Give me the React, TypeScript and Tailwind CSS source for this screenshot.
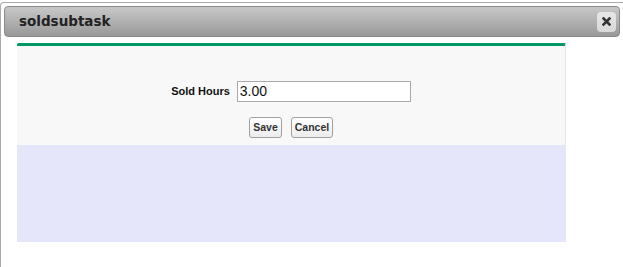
import React from 'react';

export default function App() {
  return (
    <div className="w-[623px] h-[267px] bg-white pt-[2px] overflow-hidden" style={{ fontFamily: '"Liberation Sans", Arial, sans-serif' }}>
      <div className="h-[275px] border-l border-t border-[#aaaaaa] rounded-tl-[4px] px-[3px] pt-[3px] bg-white">
        <div className="h-[31px] flex items-center justify-between rounded-[4px] border border-[#8a8a8a] bg-gradient-to-b from-[#c8c8c8] to-[#999999] pl-[14px] pr-[3px]">
          <span className="text-[13.5px] font-bold text-[#222222]" style={{ fontFamily: '"DejaVu Sans", Verdana, sans-serif' }}>soldsubtask</span>
          <button className="w-[19px] h-[20px] rounded-[4px] bg-gradient-to-b from-[#e6e6e6] to-[#d8d8d8] flex items-center justify-center">
            <svg width="9" height="9" viewBox="0 0 9 9">
              <path d="M1.5 1.5 L7.5 7.5 M7.5 1.5 L1.5 7.5" stroke="#333" strokeWidth="2.6" strokeLinecap="square" />
            </svg>
          </button>
        </div>
        <div className="ml-[13px] mt-[6px] w-[549px]">
          <div className="border-t-[3px] border-[#009966] rounded-t-[2px] bg-[#f8f8f8] border-r border-r-[#e4e4e4] rounded-b-[3px] h-[102px] flex flex-col items-center pt-[35px]">
            <div className="flex items-center">
              <span className="text-[11px] font-bold text-[#111] mr-[7px]">Sold Hours</span>
              <input
                defaultValue="3.00"
                className="w-[174px] h-[21px] border border-[#a9a9a9] bg-white px-[2px] text-[14px] text-[#111] outline-none"
              />
            </div>
            <div className="flex gap-[9px] mt-[15px]">
              <button className="h-[21px] w-[33px] border border-[#a0a0a0] rounded-[3px] bg-gradient-to-b from-[#ffffff] to-[#ececec] text-[10.5px] font-bold text-[#333]">Save</button>
              <button className="h-[21px] w-[42px] border border-[#a0a0a0] rounded-[3px] bg-gradient-to-b from-[#ffffff] to-[#ececec] text-[10.5px] font-bold text-[#333]">Cancel</button>
            </div>
          </div>
          <div className="h-[97px] bg-[#e6e6fa]" />
        </div>
      </div>
    </div>
  );
}
